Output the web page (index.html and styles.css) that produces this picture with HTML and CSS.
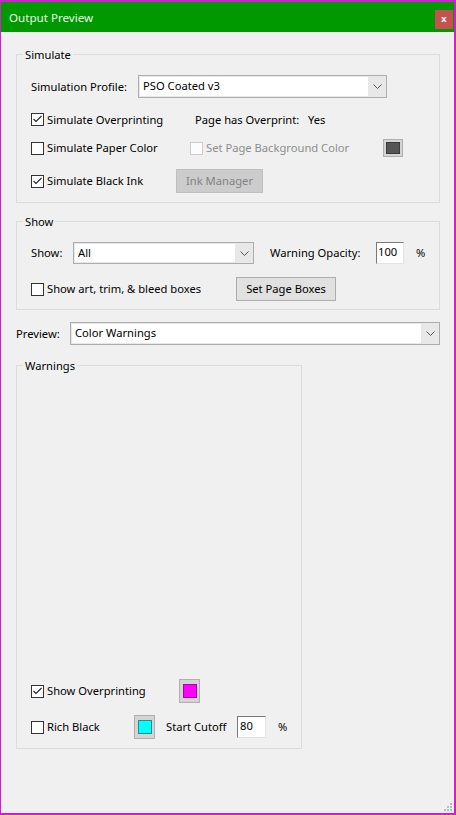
FILE: index.html
```html
<!DOCTYPE html>
<html lang="en">
<head>
<meta charset="utf-8">
<title>Output Preview</title>
<link rel="stylesheet" href="styles.css">
</head>
<body>
<div class="window">
  <div class="titlebar">
    <span class="title">Output Preview</span>
    <span class="close">x</span>
  </div>
  <div class="content">
    <fieldset class="group g-simulate">
      <legend>Simulate</legend>
      <div class="group-body">
        <div class="row r-profile">
          <span class="lbl w-profile">Simulation Profile:</span>
          <div class="select s-profile">
            <span class="select-field">PSO Coated v3</span>
            <span class="select-arrow"><svg width="9" height="5" viewBox="0 0 9 5"><polyline points="0.5,0.5 4.5,4.5 8.5,0.5" fill="none" stroke="#555" stroke-width="1"/></svg></span>
          </div>
        </div>
        <div class="row r-overprint">
          <label class="check w-c164"><span class="box"><svg width="11" height="11" viewBox="0 0 11 11"><polyline points="1.5,5 4,7.5 9.5,2" fill="none" stroke="#222" stroke-width="1.1"/></svg></span><span class="check-text">Simulate Overprinting</span></label>
          <span class="lbl w-113">Page has Overprint:</span>
          <span class="lbl">Yes</span>
        </div>
        <div class="row r-paper">
          <label class="check w-c159"><span class="box"></span><span class="check-text">Simulate Paper Color</span></label>
          <label class="check disabled w-c193"><span class="box"></span><span class="check-text">Set Page Background Color</span></label>
          <span class="swatch sw-small"><span class="swatch-fill fill-gray"></span></span>
        </div>
        <div class="row r-black">
          <label class="check w-c145"><span class="box"><svg width="11" height="11" viewBox="0 0 11 11"><polyline points="1.5,5 4,7.5 9.5,2" fill="none" stroke="#222" stroke-width="1.1"/></svg></span><span class="check-text">Simulate Black Ink</span></label>
          <span class="btn btn-disabled b-ink">Ink Manager</span>
        </div>
      </div>
    </fieldset>

    <fieldset class="group g-show">
      <legend>Show</legend>
      <div class="group-body">
        <div class="row r-show">
          <span class="lbl w-42">Show:</span>
          <div class="select s-show">
            <span class="select-field">All</span>
            <span class="select-arrow"><svg width="9" height="5" viewBox="0 0 9 5"><polyline points="0.5,0.5 4.5,4.5 8.5,0.5" fill="none" stroke="#555" stroke-width="1"/></svg></span>
          </div>
          <span class="lbl w-106 ml-16">Warning Opacity:</span>
          <span class="input i-opacity">100</span>
          <span class="lbl ml-12">%</span>
        </div>
        <div class="row r-boxes">
          <label class="check w-c205"><span class="box"></span><span class="check-text">Show art, trim, &amp; bleed boxes</span></label>
          <span class="btn b-boxes">Set Page Boxes</span>
        </div>
      </div>
    </fieldset>

    <div class="row r-preview">
      <span class="lbl w-54">Preview:</span>
      <div class="select s-preview">
        <span class="select-field">Color Warnings</span>
        <span class="select-arrow"><svg width="9" height="5" viewBox="0 0 9 5"><polyline points="0.5,0.5 4.5,4.5 8.5,0.5" fill="none" stroke="#555" stroke-width="1"/></svg></span>
      </div>
    </div>

    <fieldset class="group g-warnings">
      <legend>Warnings</legend>
      <div class="group-body warnings-body">
        <div class="row r-w">
          <label class="check w-c148"><span class="box"><svg width="11" height="11" viewBox="0 0 11 11"><polyline points="1.5,5 4,7.5 9.5,2" fill="none" stroke="#222" stroke-width="1.1"/></svg></span><span class="check-text">Show Overprinting</span></label>
          <span class="swatch sw-big"><span class="swatch-fill fill-magenta"></span></span>
        </div>
        <div class="row r-w r-rich">
          <label class="check w-c103"><span class="box"></span><span class="check-text">Rich Black</span></label>
          <span class="swatch sw-big"><span class="swatch-fill fill-cyan"></span></span>
          <span class="lbl w-71 ml-11">Start Cutoff</span>
          <span class="input i-cutoff">80</span>
          <span class="lbl ml-12">%</span>
        </div>
      </div>
    </fieldset>
  </div>
  <svg class="grip" width="10" height="10" viewBox="0 0 10 10">
    <rect x="7" y="1" width="2" height="2" fill="#bdbdbd"/>
    <rect x="4" y="4" width="2" height="2" fill="#bdbdbd"/>
    <rect x="7" y="4" width="2" height="2" fill="#bdbdbd"/>
    <rect x="1" y="7" width="2" height="2" fill="#bdbdbd"/>
    <rect x="4" y="7" width="2" height="2" fill="#bdbdbd"/>
    <rect x="7" y="7" width="2" height="2" fill="#bdbdbd"/>
  </svg>
</div>
</body>
</html>
```

FILE: styles.css
```css
* { box-sizing: border-box; }
html, body { margin: 0; padding: 0; }
body {
  width: 456px;
  height: 815px;
  background: #f0f0f0;
  font-family: "Noto Sans", "Open Sans", sans-serif;
  font-size: 11.2px;
  line-height: 16px;
  color: #000;
}
.window {
  position: relative;
  width: 456px;
  height: 815px;
  border-style: solid;
  border-color: #d21dd2;
  border-width: 2px 2px 2px 1px;
  background: #f0f0f0;
  display: flex;
  flex-direction: column;
}
.titlebar {
  flex: none;
  height: 30px;
  background: #009900;
  display: flex;
  justify-content: space-between;
  align-items: flex-start;
}
.title {
  color: #e8f6e8;
  font-size: 11.6px;
  line-height: 31px;
  padding-left: 8px;
}
.close {
  width: 18px;
  height: 19px;
  margin-top: 8px;
  margin-right: 1px;
  background: #c75050;
  color: #f4f4f4;
  font-family: "DejaVu Sans", sans-serif;
  font-weight: bold;
  font-size: 9px;
  line-height: 18px;
  text-align: center;
}
.content {
  flex: 1;
  padding: 13px 0 0 15px;
  display: flex;
  flex-direction: column;
  align-items: flex-start;
}
.group {
  margin: 0;
  padding: 0;
  border: 1px solid #dcdcdc;
  min-width: 0;
}
.group legend {
  margin-left: 6px;
  padding: 2px 2px 0;
  line-height: 16px;
}
.group-body {
  display: flex;
  flex-direction: column;
  padding: 12px 14px 9px 14px;
}
.g-simulate { width: 424px; }
.g-show { width: 424px; margin-top: 9px; }
.g-show .group-body { padding-bottom: 8px; }
.g-warnings { width: 286px; margin-top: 11px; }
.warnings-body {
  height: 374px;
  padding-top: 0;
  justify-content: flex-end;
}

.row { display: flex; align-items: center; flex: none; }
.r-profile { height: 23px; }
.r-overprint { height: 23px; margin-top: 10px; }
.r-paper { height: 20px; margin-top: 7px; }
.r-black { height: 24px; margin-top: 11px; }
.r-show { height: 22px; }
.r-boxes { height: 24px; margin-top: 13px; }
.r-preview { height: 23px; margin-top: 12px; width: 424px; }
.r-w { height: 24px; }
.r-rich { margin-top: 12px; }

.lbl { white-space: nowrap; flex: none; }
.w-profile { width: 107px; }
.w-113 { width: 113px; }
.w-42 { width: 42px; }
.w-106 { width: 106px; }
.w-54 { width: 54px; }
.w-71 { width: 71px; }
.ml-16 { margin-left: 16px; }
.ml-12 { margin-left: 12px; }
.ml-11 { margin-left: 11px; }

.check { display: flex; align-items: center; flex: none; white-space: nowrap; }
.w-c164 { width: 164px; }
.w-c159 { width: 159px; }
.w-c193 { width: 193px; }
.w-c145 { width: 145px; }
.w-c205 { width: 205px; }
.w-c148 { width: 148px; }
.w-c103 { width: 103px; }
.box {
  width: 13px;
  height: 13px;
  border: 1px solid #333;
  background: #fff;
  display: flex;
  align-items: center;
  justify-content: center;
  flex: none;
}
.box svg { display: block; }
.check-text { margin-left: 3px; }
.check.disabled .box { border-color: #cccccc; background: #fcfcfc; }
.check.disabled .check-text { color: #8d8d8d; }

.select {
  display: flex;
  height: 100%;
  border: 1px solid #adadad;
  background: #e8e8e8;
  padding: 1px 0 1px 1px;
  flex: none;
}
.select-field {
  flex: 1;
  background: #fff;
  padding-left: 3px;
  line-height: 18px;
  white-space: nowrap;
}
.select-arrow {
  width: 18px;
  display: flex;
  align-items: center;
  justify-content: center;
}
.select-arrow svg { display: block; }
.s-profile { width: 249px; }
.s-show { width: 181px; }
.s-preview { width: 370px; }

.input {
  height: 22px;
  background: #fff;
  border: 1px solid;
  border-color: #7a7a7a #e3e3e3 #e3e3e3 #7a7a7a;
  line-height: 18px;
  flex: none;
}
.i-opacity { width: 28px; padding-left: 1px; }
.i-cutoff { width: 29px; padding-left: 2px; }

.btn {
  display: flex;
  align-items: center;
  justify-content: center;
  height: 24px;
  border: 1px solid #adadad;
  background: #e1e1e1;
  white-space: nowrap;
  flex: none;
}
.btn-disabled { background: #cccccc; border-color: #bfbfbf; color: #838383; }
.b-ink { width: 87px; }
.b-boxes { width: 100px; }

.swatch {
  display: flex;
  align-items: center;
  justify-content: center;
  border: 1px solid #b0b0b0;
  background: #d4d4d4;
  flex: none;
}
.sw-small { width: 20px; height: 18px; }
.sw-big { width: 21px; height: 24px; }
.swatch-fill { display: block; width: 14px; height: 14px; border: 1px solid; }
.sw-small .swatch-fill { height: 12px; }
.fill-gray { background: #555555; border-color: #3a3a3a; }
.fill-magenta { background: #ff00ff; border-color: #a800a8; }
.fill-cyan { background: #00ffff; border-color: #2a8a8a; }

.grip { position: absolute; right: 1px; bottom: 1px; display: block; }
```
